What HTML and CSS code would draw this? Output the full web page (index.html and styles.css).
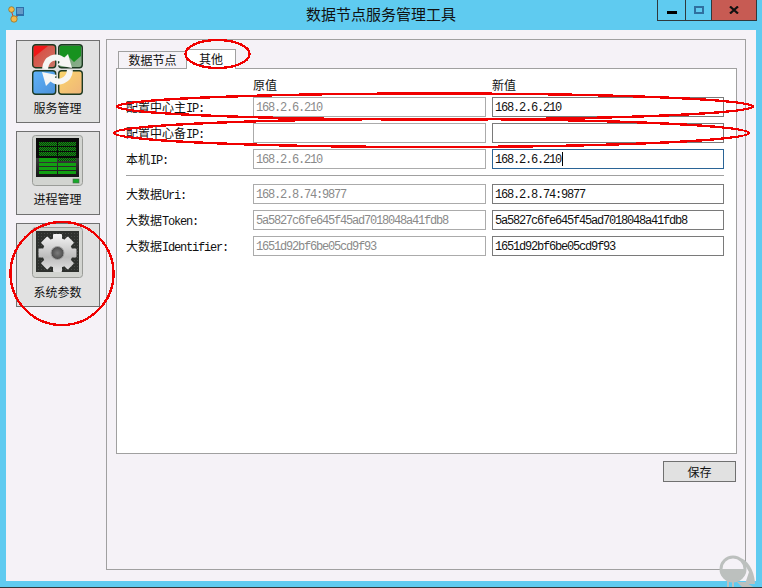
FILE: index.html
```html
<!DOCTYPE html>
<html lang="zh-CN">
<head>
<meta charset="utf-8">
<title>数据节点服务管理工具</title>
<link rel="stylesheet" href="styles.css">
</head>
<body>
<div class="window">
  <header class="titlebar">
    <svg class="app-icon" width="18" height="20" viewBox="0 0 18 20">
      <path d="M3 5 L6 14 L12 9" fill="none" stroke="#d8402a" stroke-width="1"/>
      <rect x="8" y="2" width="8" height="9" fill="#2f6fa8"/>
      <path d="M9 4h6M9 6h6M9 8h6" stroke="#9cc6e6" stroke-width="1"/>
      <circle cx="3.5" cy="4.5" r="2.8" fill="#f4b84a" stroke="#8a6a20" stroke-width=".7"/>
      <circle cx="6" cy="14" r="3.2" fill="#f4b84a" stroke="#8a6a20" stroke-width=".7"/>
    </svg>
    <h1 class="title">数据节点服务管理工具</h1>
    <div class="controls">
      <div class="ctl ctl-min"><span class="min-bar"></span></div>
      <div class="ctl ctl-max"><span class="max-box"></span></div>
      <div class="ctl ctl-close">
        <svg width="10" height="8" viewBox="0 0 10 8"><path d="M1 0.5 L9 7.5 M9 0.5 L1 7.5" stroke="#111" stroke-width="2.2" fill="none"/></svg>
      </div>
    </div>
  </header>

  <div class="client">
    <nav class="sidebar">
      <div class="nav-btn">
        <svg class="nav-icon" width="51" height="51" viewBox="0 0 51 51">
          <defs>
            <linearGradient id="tileR" x1="0" y1="0" x2="1" y2="1"><stop offset="0" stop-color="#e04038"/><stop offset="1" stop-color="#c87868"/></linearGradient>
            <linearGradient id="tileG" x1="0" y1="0" x2="1" y2="1"><stop offset="0" stop-color="#5f9a62"/><stop offset="1" stop-color="#8fb090"/></linearGradient>
            <linearGradient id="tileB" x1="0" y1="0" x2="1" y2="1"><stop offset="0" stop-color="#60b4fa"/><stop offset="1" stop-color="#4a90d8"/></linearGradient>
            <linearGradient id="tileY" x1="0" y1="0" x2="1" y2="1"><stop offset="0" stop-color="#fbd66a"/><stop offset="1" stop-color="#eeb47a"/></linearGradient>
          </defs>
          <g stroke="#1d3a22" stroke-width="1.4">
            <rect x=".7" y=".7" width="23" height="23" rx="3" fill="url(#tileR)"/>
            <rect x="26.7" y=".7" width="23.6" height="23" rx="3" fill="url(#tileG)"/>
            <rect x=".7" y="26.7" width="23" height="23.6" rx="3" fill="url(#tileB)"/>
            <rect x="26.7" y="26.7" width="23.6" height="23.6" rx="3" fill="url(#tileY)"/>
          </g>
          <path d="M2 2 H16 L2 13 Z" fill="#f01818"/>
          <path d="M28 2 H49 V12 L42 18 L36 12 L28 14 Z" fill="#17921f"/>
          <g fill="none" stroke="#f6f6f4" stroke-width="6">
            <path d="M13 25 C14 14 24 10 32 17"/>
            <path d="M38 26 C37 37 26 41 19 34"/>
          </g>
          <path d="M40 24 L36 10 L25 21 Z" fill="#f6f6f4"/>
          <path d="M10 28 L14 42 L25 31 Z" fill="#f6f6f4"/>
        </svg>
        <span class="nav-label">服务管理</span>
      </div>
      <div class="nav-btn">
        <svg class="nav-icon" width="51" height="51" viewBox="0 0 51 51">
          <defs>
            <pattern id="dither" width="2" height="2" patternUnits="userSpaceOnUse"><rect width="2" height="2" fill="#0c3a0c"/><rect width="1" height="1" fill="#129012"/><rect x="1" y="1" width="1" height="1" fill="#129012"/></pattern>
            <linearGradient id="lowerScreen" x1="0" y1="0" x2="0" y2="1"><stop offset="0" stop-color="#3c3c3c"/><stop offset="1" stop-color="#141414"/></linearGradient>
          </defs>
          <rect x=".5" y=".5" width="50" height="50" rx="3" fill="#d2d4d0" stroke="#9a9c98"/>
          <rect x="4" y="3" width="43" height="39" fill="#0a0a0a"/>
          <rect x="4" y="23" width="43" height="19" fill="url(#lowerScreen)"/>
          <g fill="url(#dither)">
            <rect x="7" y="7" width="18" height="4"/><rect x="26" y="7" width="18" height="4"/>
            <rect x="7" y="12" width="18" height="4"/><rect x="26" y="12" width="18" height="4"/>
            <rect x="7" y="17" width="18" height="4"/><rect x="26" y="17" width="18" height="4"/>
            <rect x="26" y="23" width="18" height="3"/>
          </g>
          <g fill="#12a012">
            <rect x="7" y="23" width="18" height="4"/>
            <rect x="7" y="28" width="18" height="3"/><rect x="26" y="28" width="18" height="3"/>
            <rect x="7" y="32" width="18" height="3"/><rect x="26" y="32" width="18" height="3"/>
            <rect x="7" y="36" width="18" height="3"/><rect x="26" y="36" width="18" height="3"/>
          </g>
          <rect x="41" y="44" width="6" height="4" fill="#17a82a" stroke="#4c6a4c" stroke-width=".6"/>
        </svg>
        <span class="nav-label">进程管理</span>
      </div>
      <div class="nav-btn">
        <svg class="nav-icon" width="51" height="51" viewBox="0 0 51 51">
          <defs>
            <pattern id="dots" width="3" height="3" patternUnits="userSpaceOnUse"><rect width="3" height="3" fill="#3a3d3a"/><rect width="1" height="1" fill="#6a6d6a"/></pattern>
            <linearGradient id="silver" gradientUnits="userSpaceOnUse" x1="0" y1="6" x2="0" y2="46"><stop offset="0" stop-color="#f8f8f8"/><stop offset=".6" stop-color="#bcbcbc"/><stop offset="1" stop-color="#e6e6e6"/></linearGradient>
            <radialGradient id="hole"><stop offset="0" stop-color="#7c7c7c"/><stop offset="1" stop-color="#4a4a4a"/></radialGradient>
            <mask id="gearMask" maskUnits="userSpaceOnUse" x="0" y="0" width="51" height="51">
              <g fill="#fff">
                <circle cx="25.5" cy="26" r="15"/>
                <rect x="21" y="7" width="9" height="38" rx="1"/>
                <rect x="21" y="7" width="9" height="38" rx="1" transform="rotate(45 25.5 26)"/>
                <rect x="21" y="7" width="9" height="38" rx="1" transform="rotate(90 25.5 26)"/>
                <rect x="21" y="7" width="9" height="38" rx="1" transform="rotate(135 25.5 26)"/>
              </g>
            </mask>
          </defs>
          <rect x=".5" y=".5" width="50" height="50" rx="3" fill="#d2d4d0" stroke="#9a9c98"/>
          <rect x="4" y="4" width="43" height="41" fill="#202220"/>
          <rect x="4" y="4" width="43" height="41" fill="url(#dots)" opacity=".55"/>
          <rect x="4" y="4" width="43" height="43" fill="url(#silver)" mask="url(#gearMask)"/>
          <circle cx="25.5" cy="26" r="6.5" fill="url(#hole)" stroke="#a4a4a4"/>
        </svg>
        <span class="nav-label nav-label-low">系统参数</span>
      </div>
    </nav>

    <main class="panel">
      <div class="tabs">
        <div class="tab">数据节点</div>
        <div class="tab tab-active">其他</div>
      </div>
      <section class="pane">
        <div class="head-spacer"></div>
        <div class="col-head">原值</div>
        <div class="col-head">新值</div>

        <div class="label"><span class="zh">配置中心主</span>IP:</div>
        <div class="field readonly">168.2.6.210</div>
        <div class="field">168.2.6.210</div>

        <div class="label"><span class="zh">配置中心备</span>IP:</div>
        <div class="field readonly"></div>
        <div class="field"></div>

        <div class="label"><span class="zh">本机</span>IP:</div>
        <div class="field readonly">168.2.6.210</div>
        <div class="field focused">168.2.6.210<span class="caret"></span></div>

        <div class="divider"></div>

        <div class="label"><span class="zh">大数据</span>Uri:</div>
        <div class="field readonly">168.2.8.74:9877</div>
        <div class="field">168.2.8.74:9877</div>

        <div class="label"><span class="zh">大数据</span>Token:</div>
        <div class="field readonly">5a5827c6fe645f45ad7018048a41fdb8</div>
        <div class="field">5a5827c6fe645f45ad7018048a41fdb8</div>

        <div class="label"><span class="zh">大数据</span>Identifier:</div>
        <div class="field readonly">1651d92bf6be05cd9f93</div>
        <div class="field">1651d92bf6be05cd9f93</div>
      </section>
      <div class="actions"><div class="save-btn">保存</div></div>
    </main>
  </div>

  <svg class="annotations" width="762" height="588" viewBox="0 0 762 588">
    <g fill="none" stroke="#f00000" stroke-width="2.4" shape-rendering="crispEdges">
      <ellipse cx="62" cy="273.5" rx="51.5" ry="51.5"/>
      <ellipse cx="217.5" cy="54" rx="32" ry="14"/>
      <ellipse cx="435" cy="106.5" rx="318" ry="13"/>
      <ellipse cx="431.5" cy="133" rx="317.5" ry="14"/>
    </g>
  </svg>

  <svg class="watermark" width="44" height="36" viewBox="0 0 44 36">
    <g fill="#bcc0be">
      <path d="M26 6 C36 10 40 24 40 32 L30 32 L34 20 Z"/>
      <rect x="12" y="28" width="2" height="8"/>
      <rect x="17" y="28" width="2" height="8"/>
      <path d="M22 30 L30 30 L40 36 L28 36 Z"/>
      <path d="M5 17 A13 13 0 0 0 31 17 Z"/>
    </g>
    <circle cx="18" cy="17" r="12" fill="none" stroke="#bcc0be" stroke-width="3"/>
  </svg>
</div>
</body>
</html>
```

FILE: styles.css
```css
* {
  box-sizing: border-box;
}

html,
body {
  margin: 0;
  padding: 0;
}

body {
  width: 762px;
  height: 588px;
  overflow: hidden;
}

.window {
  position: relative;
  width: 762px;
  height: 588px;
  overflow: hidden;
  display: flex;
  flex-direction: column;
  background: #5fcbf0;
  border-bottom: 1px solid #30383c;
  font-family: "Liberation Mono", "Noto Sans CJK SC", monospace;
  font-size: 12px;
  letter-spacing: -1.2px;
  color: #111;
}

.zh,
.title,
.nav-label,
.tab,
.col-head,
.save-btn {
  font-family: "Noto Sans CJK SC", sans-serif;
  letter-spacing: 0;
}

/* title bar */
.titlebar {
  height: 30px;
  flex: none;
  display: grid;
  grid-template-columns: 1fr auto 1fr;
  align-items: start;
}

.app-icon {
  margin: 5px 0 0 8px;
}

.title {
  margin: 4px 0 0;
  font-size: 15px;
  font-weight: 400;
  line-height: 20px;
  color: #111;
}

.controls {
  justify-self: end;
  margin-right: 5px;
  display: flex;
  height: 21px;
  border: 1px solid #30383c;
  border-top: 0;
}

.ctl {
  display: flex;
  align-items: center;
  justify-content: center;
  height: 20px;
}

.ctl-min {
  width: 28px;
  border-right: 1px solid #30383c;
}

.ctl-max {
  width: 26px;
  border-right: 1px solid #30383c;
}

.ctl-close {
  flex: 1;
  width: 44px;
  background: #c75b53;
}

.min-bar {
  width: 10px;
  height: 3px;
  margin-top: 5px;
  background: #000;
}

.max-box {
  width: 10px;
  height: 8px;
  border: 2px solid #2f6f9f;
}

/* client area */
.client {
  flex: none;
  height: 551px;
  margin: 0 6px;
  padding: 9px 10px 0;
  display: flex;
  gap: 6px;
  background: #f5f2f7;
}

.sidebar {
  width: 84px;
  margin-top: 1px;
  display: grid;
  grid-template-rows: 83px 84px 84px;
  gap: 8px;
  align-content: start;
}

.nav-btn {
  display: flex;
  flex-direction: column;
  align-items: center;
  padding: 3px 1px 0 0;
  background: #e1e1e1;
  border: 1px solid #707070;
}

.nav-icon {
  flex: none;
}

.nav-label {
  margin-top: 6px;
  font-size: 12px;
  line-height: 14px;
}

.nav-label-low {
  margin-top: 7px;
}

/* main panel */
.panel {
  width: 640px;
  height: 531px;
  padding: 9px 8px 0 9px;
  background: #f5f2f7;
  border: 1px solid #a0a0a0;
}

.tabs {
  display: flex;
  align-items: flex-end;
  height: 20px;
  padding-left: 2px;
  position: relative;
  z-index: 1;
  margin-bottom: -1px;
}

.tab {
  width: 69px;
  height: 18px;
  line-height: 16px;
  text-align: center;
  font-size: 12px;
  border: 1px solid #a0a0a0;
  background: #f5f2f7;
}

.tab-active {
  width: 50px;
  height: 20px;
  margin-left: -1px;
  line-height: 18px;
  background: #fff;
  border-bottom: 0;
}

.pane {
  height: 386px;
  padding: 9px 0 0 9px;
  background: #fff;
  border: 1px solid #a0a0a0;
  display: grid;
  grid-template-columns: 121px 233px 232px;
  grid-template-rows: 13px 20px 20px 20px 3px 20px 20px 20px;
  gap: 6px;
  align-content: start;
}

.col-head {
  font-size: 12px;
  line-height: 13px;
}

.label {
  line-height: 20px;
  white-space: nowrap;
}

.field {
  height: 20px;
  padding: 1px 2px 0;
  line-height: 18px;
  background: #fff;
  border: 1px solid #7a7a7a;
  white-space: nowrap;
  overflow: hidden;
}

.readonly {
  border-color: #ababab;
  color: #8a8a8a;
}

.focused {
  border-color: #2a6496;
}

.caret {
  display: inline-block;
  width: 1px;
  height: 14px;
  margin-left: 1px;
  vertical-align: -3px;
  background: #000;
}

.divider {
  grid-column: 1 / -1;
  height: 1px;
  align-self: start;
  background: #a0a0a0;
}

/* footer action */
.actions {
  display: flex;
  justify-content: flex-end;
  margin-top: 7px;
  padding-right: 1px;
}

.save-btn {
  width: 73px;
  height: 21px;
  line-height: 19px;
  text-align: center;
  font-size: 12px;
  background: #e1e1e1;
  border: 1px solid #707070;
}

/* overlays */
.annotations {
  position: absolute;
  left: 0;
  top: 0;
  z-index: 2;
  pointer-events: none;
}

.watermark {
  position: absolute;
  left: 715px;
  top: 552px;
  z-index: 2;
  pointer-events: none;
}
```
